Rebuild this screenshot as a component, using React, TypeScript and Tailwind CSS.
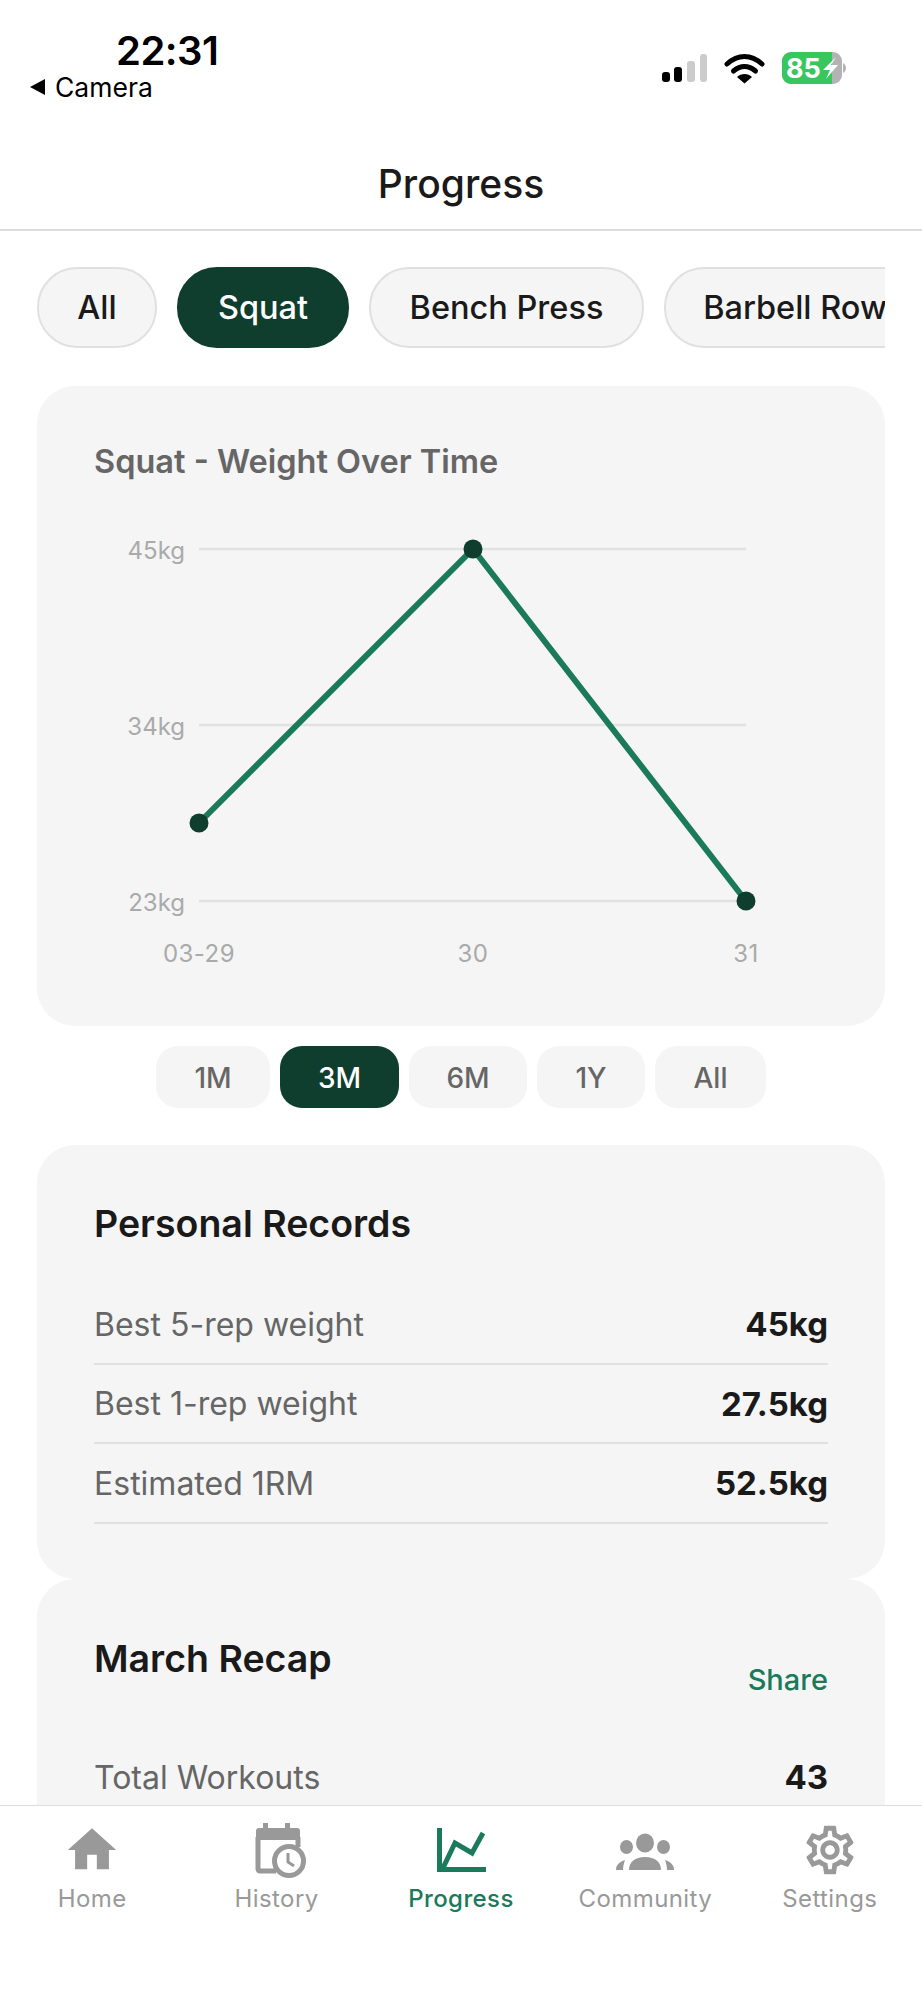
import React from 'react';
import { MdHome, MdOutlineSettings } from 'react-icons/md';

const chips = [
  { label: 'All', w: 'w-[120px]' },
  { label: 'Squat', w: 'w-[172px]', active: true },
  { label: 'Bench Press', w: 'w-[275px]' },
  { label: 'Barbell Row', w: 'w-[262px]' },
];

const ranges = [
  { label: '1M', w: 'w-[114px]' },
  { label: '3M', w: 'w-[119px]', active: true },
  { label: '6M', w: 'w-[118px]' },
  { label: '1Y', w: 'w-[108px]' },
  { label: 'All', w: 'w-[111px]' },
];

const records = [
  { label: 'Best 5-rep weight', value: '45kg' },
  { label: 'Best 1-rep weight', value: '27.5kg' },
  { label: 'Estimated 1RM', value: '52.5kg' },
];

const StatusBar = () => (
  <div className="relative h-[118px] shrink-0">
    <div className="absolute left-[116px] top-[27px] text-[40px] leading-[48px] font-semibold tracking-[-0.5px] text-black">22:31</div>
    <div className="absolute left-[30px] top-[71px] flex items-center gap-[10px] text-[26.500px] leading-[32px] text-black">
      <span className="w-0 h-0 border-y-[8px] border-y-transparent border-r-[15px] border-r-black" />
      <span>Camera</span>
    </div>
    <svg className="absolute left-[660px] top-[50px]" width="190" height="40" viewBox="0 0 190 40">
      <rect x="2" y="22" width="8" height="10" rx="3" fill="#000" />
      <rect x="14" y="17" width="8" height="15" rx="3" fill="#000" />
      <rect x="27" y="11" width="8" height="21" rx="3" fill="#ccc" />
      <rect x="40" y="4" width="7" height="28" rx="3" fill="#ccc" />
      <path d="M67 14c11-10 24-10 35 0" fill="none" stroke="#000" strokeWidth="5" strokeLinecap="round" />
      <path d="M73.5 21c7-6 15-6 22 0" fill="none" stroke="#000" strokeWidth="5" strokeLinecap="round" />
      <path d="M77 27c4-4 11-4 15 0l-7.500 6.500z" fill="#000" />
      <rect x="122" y="2" width="60" height="32" rx="9" fill="#b3b3b3" />
      <path d="M131 2h41v32h-41a9 9 0 0 1-9-9v-14a9 9 0 0 1 9-9z" fill="#38c75f" />
      <path d="M183 13c2 1 3 3 3 5s-1 4-3 5z" fill="#b3b3b3" />
      <path d="M176 7l-13 13h7l-4 9 12-14h-7z" fill="#fff" />
      <text x="126" y="28" fontSize="27" fontWeight="700" fill="#fff" fontFamily="Inter">85</text>
    </svg>
  </div>
);

const Chart = () => {
  const grid = [
    { y: 54, label: '45kg' },
    { y: 230, label: '34kg' },
    { y: 406, label: '23kg' },
  ];
  const points = [
    { x: 162, y: 328, label: '03-29' },
    { x: 436, y: 54, label: '30' },
    { x: 709, y: 406, label: '31' },
  ];
  return (
    <svg className="mt-[13px] block" width="848" height="500" viewBox="0 0 848 500" fontFamily="Inter">
      {grid.map(row => (
        <g key={row.label}>
          <line x1="162" x2="709" y1={row.y} y2={row.y} stroke="#e2e2e2" strokeWidth="2.5" />
          <text x="148" y={row.y + 10} textAnchor="end" fontSize="24" fill="#aaa">{row.label}</text>
        </g>
      ))}
      <polyline points="162,328 436,54 709,406" fill="none" stroke="#1b7a5a" strokeWidth="6" />
      {points.map(p => (
        <g key={p.label}>
          <circle cx={p.x} cy={p.y} r="9.500" fill="#0f3d2e" />
          <text x={p.x} y="467" textAnchor="middle" fontSize="24" letterSpacing="0.5" fill="#aaa">{p.label}</text>
        </g>
      ))}
    </svg>
  );
};

const HistoryIcon = () => (
  <svg width="58" height="58" viewBox="0 0 58 58" fill="none">
    <path d="M15 2h5v5h-5zM37 2h5v5h-5z" fill="#999" />
    <rect x="8" y="7" width="44" height="12" rx="3" fill="#999" />
    <path d="M10 16v32a2 2 0 0 0 2 2h16" stroke="#999" strokeWidth="5" />
    <path d="M50 16v10" stroke="#999" strokeWidth="5" />
    <circle cx="41" cy="40" r="14.500" fill="#fff" stroke="#999" strokeWidth="5" />
    <path d="M40 32v9l6 4" stroke="#999" strokeWidth="3" />
  </svg>
);

const ProgressIcon = () => (
  <svg width="58" height="58" viewBox="0 0 58 58" fill="none" stroke="#1b7a5a" strokeWidth="5">
    <path d="M7.500 7v41.500H54" />
    <path d="M10 49l13-27 17 10 11-20" />
  </svg>
);

const CommunityIcon = () => (
  <svg width="58" height="58" viewBox="0 0 58 58" fill="#999">
    <ellipse cx="29" cy="22" rx="9" ry="9.500" />
    <ellipse cx="10.500" cy="26" rx="6.500" ry="7" />
    <ellipse cx="47.500" cy="26" rx="6.500" ry="7" />
    <path d="M13 49c0-8 6-13 16-13s16 5 16 13z" />
    <path d="M0 49c0-5 3-8 9-10-1 3-2 6-2 10z" />
    <path d="M58 49c0-5-3-8-9-10 1 3 2 6 2 10z" />
  </svg>
);

const tabs = [
  { label: 'Home', icon: <MdHome size={58} color="#999" /> },
  { label: 'History', icon: <HistoryIcon /> },
  { label: 'Progress', icon: <ProgressIcon />, active: true },
  { label: 'Community', icon: <CommunityIcon /> },
  { label: 'Settings', icon: <MdOutlineSettings size={58} color="#999" /> },
];

const TabBar = () => (
  <div className="h-[195px] shrink-0 grid grid-cols-5 border-t border-[#ddd] pt-[15px] bg-white">
    {tabs.map(tab => (
      <div key={tab.label} className="flex flex-col items-center">
        <div className="h-[58px] w-[58px]">{tab.icon}</div>
        <div className={`mt-[5px] text-[24px] leading-[30px] tracking-[0.4px] ${tab.active ? 'font-medium text-[#1b7a5a]' : 'text-[#999]'}`}>{tab.label}</div>
      </div>
    ))}
  </div>
);

export default function App() {
  return (
    <div className="h-[2000px] w-[922px] flex flex-col overflow-hidden bg-white font-['Inter','Noto_Sans',sans-serif]">
      <StatusBar />
      <div className="h-[113px] shrink-0 flex items-center justify-center pt-[22px] border-b-2 border-[#dcdcdc] text-[39px] font-medium text-[#1a1a1a]">Progress</div>
      <div className="flex-1 min-h-0 overflow-hidden px-[37px]">
        <div className="mt-[36px] flex gap-[20px] overflow-hidden">
          {chips.map(c => (
            <div key={c.label} className={`${c.w} h-[81px] shrink-0 rounded-[40px] flex items-center justify-center pt-[2px] text-[32.500px] font-medium border-2 ${c.active ? 'bg-[#0f3d2e] border-[#0f3d2e] text-white' : 'bg-[#f5f5f5] border-[#e0e0e0] text-[#1a1a1a]'}`}>{c.label}</div>
          ))}
        </div>

        <div className="mt-[38px] h-[640px] overflow-hidden rounded-[38px] bg-[#f5f5f5] pt-[56px]">
          <div className="pl-[57px] text-[32.500px] leading-[40px] font-semibold text-[#666]">Squat - Weight Over Time</div>
          <Chart />
        </div>

        <div className="mt-[20px] flex justify-center gap-[10px]">
          {ranges.map(r => (
            <div key={r.label} className={`${r.w} h-[62px] rounded-[22px] flex items-center justify-center pt-[2px] text-[28px] font-medium ${r.active ? 'bg-[#0f3d2e] text-white' : 'bg-[#f5f5f5] text-[#666]'}`}>{r.label}</div>
          ))}
        </div>

        <div className="mt-[37px] h-[434px] rounded-[38px] bg-[#f5f5f5] px-[57px] pt-[55px]">
          <div className="text-[37.500px] leading-[48px] font-semibold text-[#1a1a1a]">Personal Records</div>
          <div className="mt-[37px]">
            {records.map(r => (
              <div key={r.label} className="h-[79.500px] flex items-center justify-between pt-[2px] border-b-2 border-[#e0e0e0]">
                <span className="text-[32px] text-[#666]">{r.label}</span>
                <span className="text-[33px] font-bold text-[#1a1a1a]">{r.value}</span>
              </div>
            ))}
          </div>
        </div>

        <div className="rounded-t-[38px] bg-[#f5f5f5] px-[57px] pt-[56px] pb-[40px]">
          <div className="flex items-start justify-between">
            <span className="text-[37.500px] leading-[48px] font-semibold text-[#1a1a1a]">March Recap</span>
            <span className="mt-[28px] text-[29px] leading-[34px] font-medium text-[#1b7a5a]">Share</span>
          </div>
          <div className="mt-[41px] h-[78px] flex items-center justify-between pt-[2px]">
            <span className="text-[32px] text-[#666]">Total Workouts</span>
            <span className="text-[33px] font-bold text-[#1a1a1a]">43</span>
          </div>
        </div>
      </div>
      <TabBar />
    </div>
  );
}
